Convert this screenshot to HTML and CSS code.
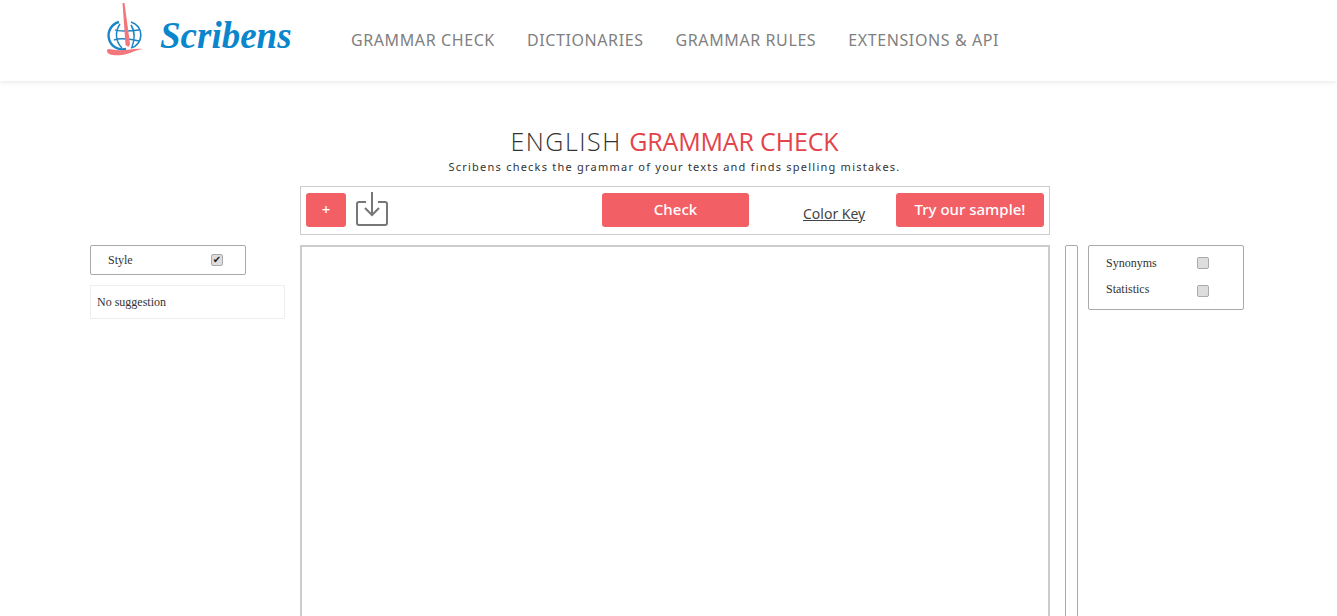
FILE: index.html
```html
<!DOCTYPE html>
<html lang="en">
<head>
    <meta charset="UTF-8">
    <meta name="viewport" content="width=device-width, initial-scale=1.0">
    <title>Scribens - English Grammar Check</title>
    <link rel="stylesheet" href="styles.css">
</head>
<body>
    <header class="site-header">
        <a class="logo" href="#">
            <svg class="logo-mark" width="38" height="54" viewBox="0 0 38 54" fill="none">
                <path d="M13 19A13.500 13.500 0 0 0 20 46" stroke="#1b84c6" stroke-width="2.400"/>
                <path d="M25 19A13.500 13.500 0 0 1 25 45" stroke="#1b84c6" stroke-width="1.600"/>
                <path d="M14 21c-5 7-5 17 2 24M9 27c5 1 9 2 24 0M8 37c5-2 12-2 25 1M25 22c4 6 4 15 1 22" stroke="#1b84c6" stroke-width="1.500"/>
                <path d="M16.500 0l2 0 5.500 41-1.500 3-3-2z" fill="#f2777c"/>
                <path d="M1 47c2-2 4 0 10 0 9 1 17-2 26-1-8 1-13 5-21 6-7 1-16 0-15-5z" fill="#f2777c"/>
            </svg>
            <span class="logo-text">Scribens</span>
        </a>
        <nav class="main-nav">
            <a href="#">GRAMMAR CHECK</a>
            <a href="#">DICTIONARIES</a>
            <a href="#">GRAMMAR RULES</a>
            <a href="#">EXTENSIONS &amp; API</a>
        </nav>
    </header>

    <div class="page-title">
        <h1><span class="light">ENGLISH</span> <span class="red">GRAMMAR CHECK</span></h1>
        <p>Scribens checks the grammar of your texts and finds spelling mistakes.</p>
    </div>

    <div class="toolbar">
        <button class="btn btn-plus">+</button>
        <svg class="import-icon" width="32" height="34" viewBox="0 0 32 34" fill="none" stroke="#777" stroke-width="2">
            <path d="M10 10H3a2 2 0 0 0-2 2v19a2 2 0 0 0 2 2h26a2 2 0 0 0 2-2V12a2 2 0 0 0-2-2h-7"/>
            <path d="M16 0v23M9 16l7 7 7-7"/>
        </svg>
        <button class="btn btn-check">Check</button>
        <a class="color-key" href="#">Color Key</a>
        <button class="btn btn-sample">Try our sample!</button>
    </div>

    <main class="workspace">
        <div class="left-col">
            <div class="option-box style-box">
                <label class="option">Style <input type="checkbox" checked></label>
            </div>
            <div class="suggestion">No suggestion</div>
        </div>
        <div class="editor"></div>
        <div class="rail"></div>
        <div class="option-box right-box">
            <label class="option">Synonyms <input type="checkbox"></label>
            <label class="option">Statistics <input type="checkbox"></label>
        </div>
    </main>
</body>
</html>
```

FILE: styles.css
```css
html, body {
    height: 616px;
    overflow: hidden;
}
body {
    margin: 0;
    font-family: "Noto Sans", sans-serif;
    background-color: #fff;
    color: #333;
}
.site-header {
    display: flex;
    align-items: center;
    height: 81px;
    padding-left: 106px;
    box-sizing: border-box;
    background-color: #fff;
    box-shadow: 0 1px 5px rgba(0, 0, 0, 0.1);
}
.logo {
    display: flex;
    align-items: flex-start;
    align-self: stretch;
    width: 245px;
    padding-top: 3px;
    box-sizing: border-box;
    text-decoration: none;
}
.logo-text {
    margin: 10px 0 0 16px;
    font-family: "Liberation Serif", serif;
    font-style: italic;
    font-weight: bold;
    font-size: 37px;
    line-height: 46px;
    color: #0a86cc;
}
.main-nav {
    display: flex;
    gap: 32px;
    margin-top: -1px;
}
.main-nav a {
    color: #808080;
    font-size: 16px;
    letter-spacing: 0.6px;
    text-decoration: none;
}
.page-title {
    margin-top: 45px;
    padding-left: 12px;
    text-align: center;
}
.page-title h1 {
    margin: 0;
    font-family: "Open Sans", sans-serif;
    font-size: 25px;
    line-height: 30px;
    font-weight: 300;
}
.page-title .light {
    letter-spacing: 1.5px;
    margin-right: 1px;
}
.page-title .red {
    color: #e3434a;
    font-weight: 400;
    letter-spacing: -0.15px;
}
.page-title p {
    margin: 3px 0 0;
    font-size: 11px;
    line-height: 16px;
    letter-spacing: 1.23px;
}
.toolbar {
    display: flex;
    align-items: flex-start;
    width: 750px;
    height: 49px;
    margin: 11px 0 0 300px;
    padding: 6px 5px 0;
    box-sizing: border-box;
    border: 1px solid #ccc;
}
.btn {
    height: 34px;
    padding: 0 0 2px;
    border: none;
    border-radius: 3px;
    background-color: #f26066;
    color: #fff;
    font-family: "Noto Sans", sans-serif;
    font-size: 15px;
    font-weight: 500;
    cursor: pointer;
}
.btn-plus {
    width: 40px;
}
.import-icon {
    margin: -1px 0 0 10px;
}
.btn-check {
    width: 147px;
    margin-left: 214px;
}
.color-key {
    width: 62px;
    margin: 11px 0 0 54px;
    color: #444;
    font-size: 14px;
    line-height: 20px;
    white-space: nowrap;
}
.btn-sample {
    width: 148px;
    margin-left: 31px;
}
.workspace {
    display: flex;
    align-items: flex-start;
    margin: 10px 0 0 90px;
    font-family: "Liberation Serif", serif;
    font-size: 12px;
    color: #333;
}
.left-col {
    width: 195px;
    margin-right: 15px;
}
.option-box {
    border: 1px solid #aaa;
    border-radius: 2px;
    box-sizing: border-box;
}
.style-box {
    width: 156px;
    height: 30px;
    padding: 0 22px 0 17px;
}
.option {
    display: flex;
    justify-content: space-between;
    align-items: center;
    height: 28px;
}
.option input {
    appearance: none;
    display: flex;
    align-items: center;
    justify-content: center;
    width: 12px;
    height: 12px;
    margin: 0 0 1px;
    border: 1px solid #aaa;
    border-radius: 2px;
    box-sizing: border-box;
    background-color: #ddd;
}
.option input:checked::after {
    content: "\2714";
    font-family: "DejaVu Sans", sans-serif;
    font-size: 10px;
    line-height: 10px;
    color: #222;
}
.suggestion {
    height: 34px;
    margin-top: 10px;
    padding-left: 6px;
    box-sizing: border-box;
    border: 1px solid #eee;
    line-height: 32px;
}
.editor {
    width: 750px;
    height: 400px;
    box-sizing: border-box;
    border: 2px solid #ccc;
    background-color: #fff;
}
.rail {
    width: 13px;
    height: 400px;
    margin: 0 10px 0 15px;
    box-sizing: border-box;
    border: 1px solid #aaa;
    border-radius: 2px;
}
.right-box {
    width: 156px;
    height: 65px;
    padding: 4px 34px 0 17px;
}
.right-box .option {
    height: 26px;
}
.right-box .option + .option input {
    margin-top: 4px;
}
```
